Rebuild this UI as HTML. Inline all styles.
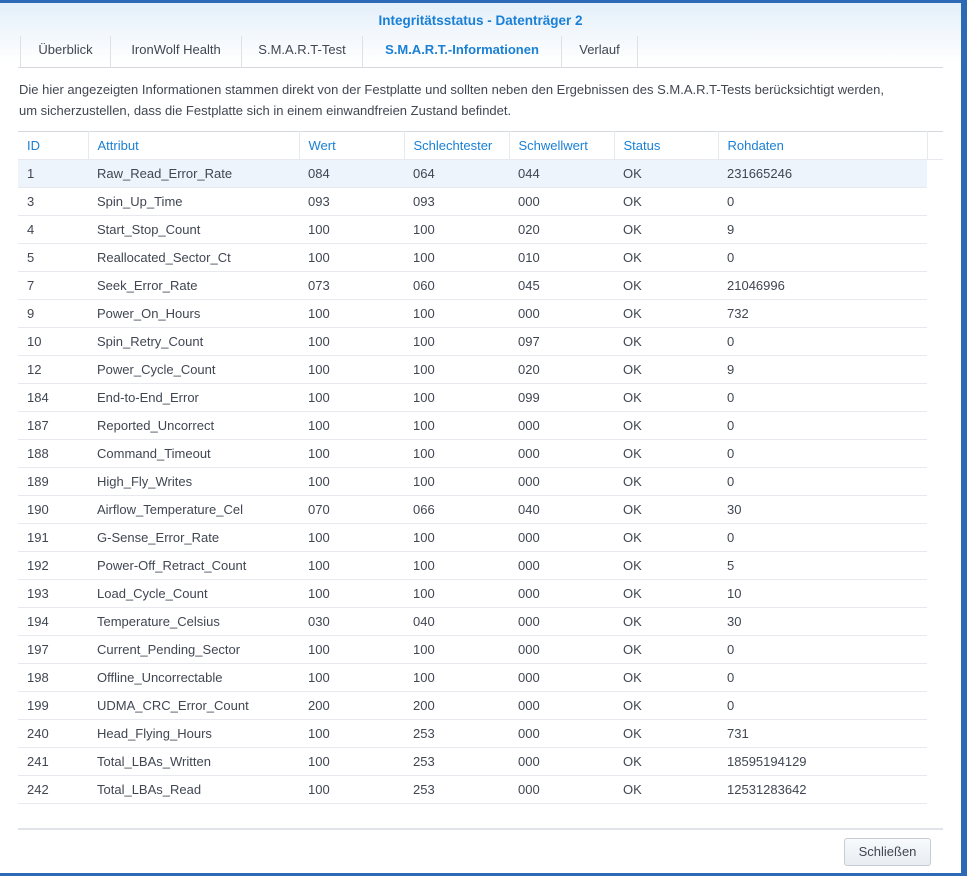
<!DOCTYPE html>
<html><head><meta charset="utf-8"><style>
body{margin:0;width:967px;height:876px;background:#fff;font-family:"Liberation Sans","DejaVu Sans",sans-serif;font-size:13px;color:#404652;position:relative;overflow:hidden}
.frame{position:absolute;inset:0;border-top:3px solid #2d6ab5;border-right:6px solid #2d6ab5;border-bottom:3px solid #2d6ab5;box-sizing:border-box}
.hdr{position:absolute;left:0;top:3px;width:961px;height:60px;background:linear-gradient(#e4effa,#fff)}
.title{position:absolute;top:13px;left:0;width:961px;text-align:center;color:#1a80d5;font-weight:bold;font-size:13.5px}
.tabs{position:absolute;top:36px;left:18px;height:31px;width:925px;border-bottom:1px solid #d5d9de}
.tab{position:absolute;top:0;height:31px;line-height:27px;text-align:center;border-left:1px solid #dde1e6;color:#404652;white-space:nowrap}
.tab.a{color:#1a80d5;font-weight:bold}
.desc{position:absolute;left:19px;top:79px;width:875px;line-height:21px}
table{position:absolute;left:18px;top:131px;border-collapse:collapse;width:925px;table-layout:fixed}
td{height:27px;border-bottom:1px solid #e6e9ed;padding:0 0 0 9px;white-space:nowrap;overflow:hidden}
th{height:27px;font-weight:normal;color:#1a80d5;text-align:left;padding:0 0 0 9px;border-top:1px solid #d5d9de;border-bottom:1px solid #e6e9ed;border-right:1px solid #e6e9ed}
tr.h td{background:#eef4fb}
td.e{border-bottom:none;background:#fff!important}
.foot{position:absolute;left:18px;top:828px;width:925px;border-top:2px solid #e0e3e7}
.btn{position:absolute;left:844px;top:838px;width:87px;height:28px;box-sizing:border-box;border:1px solid #c6ccd3;border-radius:3px;background:linear-gradient(#f8fafc,#e8edf2);text-align:center;line-height:26px;color:#404652}
</style></head><body>
<div class="hdr"></div>
<div class="title">Integritätsstatus - Datenträger 2</div>
<div class="tabs">
<div class="tab" style="left:2px;width:89px">Überblick</div>
<div class="tab" style="left:92px;width:130px">IronWolf Health</div>
<div class="tab" style="left:223px;width:120px">S.M.A.R.T-Test</div>
<div class="tab a" style="left:344px;width:198px">S.M.A.R.T.-Informationen</div>
<div class="tab" style="left:543px;width:75px;border-right:1px solid #dde1e6">Verlauf</div>
</div>
<div class="desc">Die hier angezeigten Informationen stammen direkt von der Festplatte und sollten neben den Ergebnissen des S.M.A.R.T-Tests berücksichtigt werden, um sicherzustellen, dass die Festplatte sich in einem einwandfreien Zustand befindet.</div>
<table>
<colgroup><col style="width:70px"><col style="width:211px"><col style="width:105px"><col style="width:105px"><col style="width:105px"><col style="width:104px"><col style="width:209px"><col style="width:16px"></colgroup>
<tr><th>ID</th><th>Attribut</th><th>Wert</th><th>Schlechtester</th><th>Schwellwert</th><th>Status</th><th>Rohdaten</th><th style="border-right:none"></th></tr>
<tr class="h"><td>1</td><td>Raw_Read_Error_Rate</td><td>084</td><td>064</td><td>044</td><td>OK</td><td>231665246</td><td class="e"></td></tr>
<tr><td>3</td><td>Spin_Up_Time</td><td>093</td><td>093</td><td>000</td><td>OK</td><td>0</td><td class="e"></td></tr>
<tr><td>4</td><td>Start_Stop_Count</td><td>100</td><td>100</td><td>020</td><td>OK</td><td>9</td><td class="e"></td></tr>
<tr><td>5</td><td>Reallocated_Sector_Ct</td><td>100</td><td>100</td><td>010</td><td>OK</td><td>0</td><td class="e"></td></tr>
<tr><td>7</td><td>Seek_Error_Rate</td><td>073</td><td>060</td><td>045</td><td>OK</td><td>21046996</td><td class="e"></td></tr>
<tr><td>9</td><td>Power_On_Hours</td><td>100</td><td>100</td><td>000</td><td>OK</td><td>732</td><td class="e"></td></tr>
<tr><td>10</td><td>Spin_Retry_Count</td><td>100</td><td>100</td><td>097</td><td>OK</td><td>0</td><td class="e"></td></tr>
<tr><td>12</td><td>Power_Cycle_Count</td><td>100</td><td>100</td><td>020</td><td>OK</td><td>9</td><td class="e"></td></tr>
<tr><td>184</td><td>End-to-End_Error</td><td>100</td><td>100</td><td>099</td><td>OK</td><td>0</td><td class="e"></td></tr>
<tr><td>187</td><td>Reported_Uncorrect</td><td>100</td><td>100</td><td>000</td><td>OK</td><td>0</td><td class="e"></td></tr>
<tr><td>188</td><td>Command_Timeout</td><td>100</td><td>100</td><td>000</td><td>OK</td><td>0</td><td class="e"></td></tr>
<tr><td>189</td><td>High_Fly_Writes</td><td>100</td><td>100</td><td>000</td><td>OK</td><td>0</td><td class="e"></td></tr>
<tr><td>190</td><td>Airflow_Temperature_Cel</td><td>070</td><td>066</td><td>040</td><td>OK</td><td>30</td><td class="e"></td></tr>
<tr><td>191</td><td>G-Sense_Error_Rate</td><td>100</td><td>100</td><td>000</td><td>OK</td><td>0</td><td class="e"></td></tr>
<tr><td>192</td><td>Power-Off_Retract_Count</td><td>100</td><td>100</td><td>000</td><td>OK</td><td>5</td><td class="e"></td></tr>
<tr><td>193</td><td>Load_Cycle_Count</td><td>100</td><td>100</td><td>000</td><td>OK</td><td>10</td><td class="e"></td></tr>
<tr><td>194</td><td>Temperature_Celsius</td><td>030</td><td>040</td><td>000</td><td>OK</td><td>30</td><td class="e"></td></tr>
<tr><td>197</td><td>Current_Pending_Sector</td><td>100</td><td>100</td><td>000</td><td>OK</td><td>0</td><td class="e"></td></tr>
<tr><td>198</td><td>Offline_Uncorrectable</td><td>100</td><td>100</td><td>000</td><td>OK</td><td>0</td><td class="e"></td></tr>
<tr><td>199</td><td>UDMA_CRC_Error_Count</td><td>200</td><td>200</td><td>000</td><td>OK</td><td>0</td><td class="e"></td></tr>
<tr><td>240</td><td>Head_Flying_Hours</td><td>100</td><td>253</td><td>000</td><td>OK</td><td>731</td><td class="e"></td></tr>
<tr><td>241</td><td>Total_LBAs_Written</td><td>100</td><td>253</td><td>000</td><td>OK</td><td>18595194129</td><td class="e"></td></tr>
<tr><td>242</td><td>Total_LBAs_Read</td><td>100</td><td>253</td><td>000</td><td>OK</td><td>12531283642</td><td class="e"></td></tr>
</table>
<div class="foot"></div>
<div class="btn">Schließen</div>
<div class="frame"></div>
</body></html>
